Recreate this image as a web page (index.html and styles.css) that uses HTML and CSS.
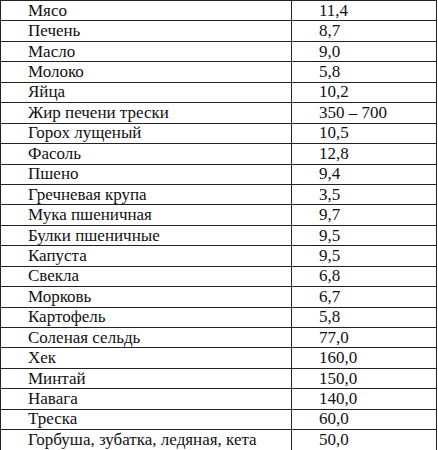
FILE: index.html
```html
<!DOCTYPE html>
<html lang="ru">
<head>
<meta charset="utf-8">
<link rel="stylesheet" href="styles.css">
</head>
<body>
<table class="tbl">
<tr><td class="name">Мясо</td><td class="val">11,4</td></tr>
<tr><td class="name">Печень</td><td class="val">8,7</td></tr>
<tr><td class="name">Масло</td><td class="val">9,0</td></tr>
<tr><td class="name">Молоко</td><td class="val">5,8</td></tr>
<tr><td class="name">Яйца</td><td class="val">10,2</td></tr>
<tr><td class="name">Жир печени трески</td><td class="val">350 – 700</td></tr>
<tr><td class="name">Горох лущеный</td><td class="val">10,5</td></tr>
<tr><td class="name">Фасоль</td><td class="val">12,8</td></tr>
<tr><td class="name">Пшено</td><td class="val">9,4</td></tr>
<tr><td class="name">Гречневая крупа</td><td class="val">3,5</td></tr>
<tr><td class="name">Мука пшеничная</td><td class="val">9,7</td></tr>
<tr><td class="name">Булки пшеничные</td><td class="val">9,5</td></tr>
<tr><td class="name">Капуста</td><td class="val">9,5</td></tr>
<tr><td class="name">Свекла</td><td class="val">6,8</td></tr>
<tr><td class="name">Морковь</td><td class="val">6,7</td></tr>
<tr><td class="name">Картофель</td><td class="val">5,8</td></tr>
<tr><td class="name">Соленая сельдь</td><td class="val">77,0</td></tr>
<tr><td class="name">Хек</td><td class="val">160,0</td></tr>
<tr><td class="name">Минтай</td><td class="val">150,0</td></tr>
<tr><td class="name">Навага</td><td class="val">140,0</td></tr>
<tr><td class="name">Треска</td><td class="val">60,0</td></tr>
<tr><td class="name">Горбуша, зубатка, ледяная, кета</td><td class="val">50,0</td></tr>
</table>
</body>
</html>
```
FILE: styles.css
```css
html, body {
  margin: 0;
  padding: 0;
  background: #fff;
}
.tbl {
  border-collapse: collapse;
  width: 437px;
  font-family: "Liberation Serif", serif;
  font-size: 17px;
  color: #111;
}
.tbl tr {
  height: 20.45px;
}
.tbl td {
  border: 1px solid #222;
  padding: 0 0 0 27px;
  font-family: "Liberation Serif", serif;
  font-size: 17px;
  line-height: 18px;
}
.name {
  width: 263px;
}
```
